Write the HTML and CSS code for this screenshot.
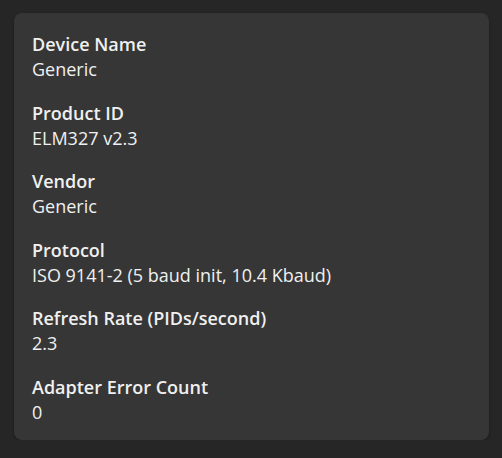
FILE: index.html
```html
<!DOCTYPE html>
<html>
<head>
<meta charset="utf-8">
<link rel="stylesheet" href="styles.css">
</head>
<body>
<div class="card">
  <div class="item"><div class="label">Device Name</div><div class="value">Generic</div></div>
  <div class="item"><div class="label">Product ID</div><div class="value">ELM327 v2.3</div></div>
  <div class="item"><div class="label">Vendor</div><div class="value">Generic</div></div>
  <div class="item"><div class="label">Protocol</div><div class="value">ISO 9141-2 (5 baud init, 10.4 Kbaud)</div></div>
  <div class="item"><div class="label">Refresh Rate (PIDs/second)</div><div class="value">2.3</div></div>
  <div class="item"><div class="label">Adapter Error Count</div><div class="value">0</div></div>
</div>
</body>
</html>
```
FILE: styles.css
```css
html, body {
  margin: 0;
  background: #262626;
}
body {
  padding: 13px 13px 0 14px;
  font-family: "Open Sans", "Noto Sans", sans-serif;
  color: #f0f0f0;
}
.card {
  background: #363636;
  border-radius: 8px;
  height: 427px;
  box-sizing: border-box;
  padding: 19px 19px 0 18px;
  display: flex;
  flex-direction: column;
  gap: 18.6px;
  box-shadow: 0 1px 3px rgba(0,0,0,0.3);
}
.label {
  font-size: 18px;
  font-weight: 600;
  line-height: 25px;
}
.value {
  font-size: 18px;
  line-height: 25px;
}
```
